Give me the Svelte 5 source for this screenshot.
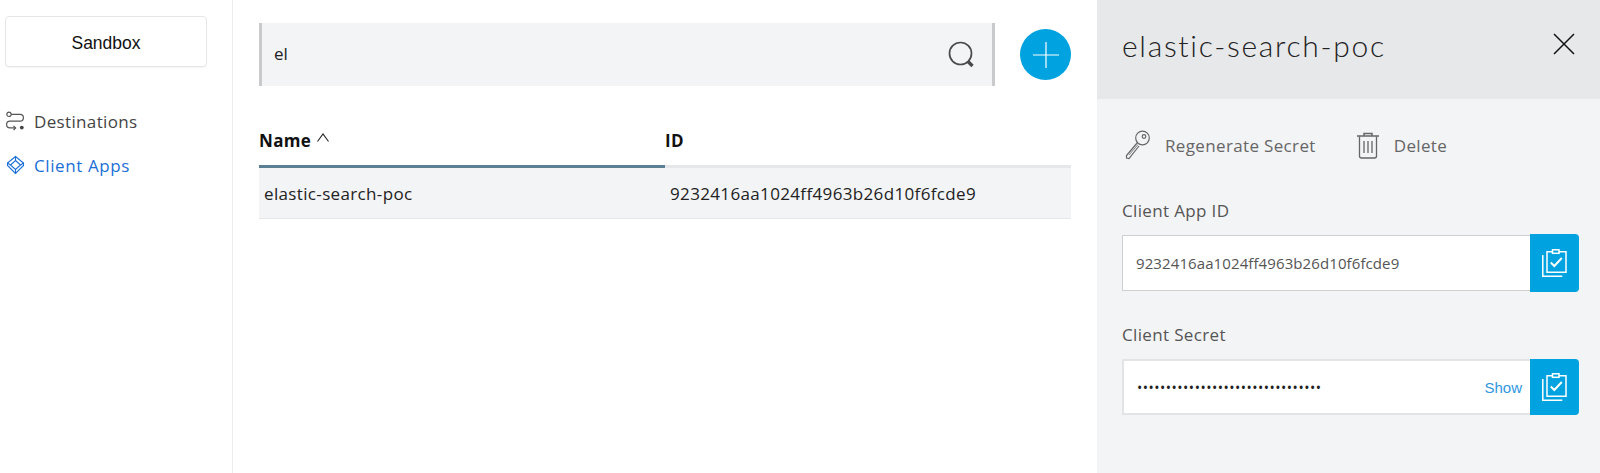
<script lang="ts">
	let search = $state('el');

	const clientApp = {
		name: 'elastic-search-poc',
		id: '9232416aa1024ff4963b26d10f6fcde9',
		secret: '•'.repeat(32)
	};
</script>

{#snippet clipboard()}
	<svg width="25" height="28" viewBox="0 0 25 28" fill="none" stroke="#fff" stroke-width="1.500">
		<path d="M10.500 2.800H5v20.500h19V2.800h-7"></path>
		<rect x="10.500" y="0.800" width="6.500" height="3.500"></rect>
		<path d="M0.800 6v21.200h19.500"></path>
		<path d="M8.800 13.500l3.500 3.500 7.500-8" stroke-width="2"></path>
	</svg>
{/snippet}

<div class="page">
	<aside class="sidebar">
		<button class="env-btn">Sandbox</button>
		<nav>
			<a class="nav-item" href="#destinations">
				<svg width="20" height="20" viewBox="0 0 20 20" fill="none" stroke="#555" stroke-width="1.200">
					<circle cx="4" cy="3.300" r="2.200"></circle>
					<path d="M6.200 3.300H15a3.400 3.400 0 0 1 0 6.800H5a3.400 3.400 0 0 0 0 6.800h5.500"></path>
					<path d="M8.500 14.800l2.100 2.100-2.100 2.100"></path>
					<circle cx="16.800" cy="16.600" r="1.900" fill="#444" stroke="none"></circle>
				</svg>
				Destinations
			</a>
			<a class="nav-item active" href="#apps">
				<svg width="20" height="20" viewBox="0 0 20 20" fill="none" stroke="#1b6fd6" stroke-width="1.100">
					<path d="M10.500 1.500l8 6.500v2.500l-8 8-8-8V8z"></path>
					<path d="M10.500 5.500l5 4.500-5 4.500-5-4.500z"></path>
					<path d="M2.500 8l3 2M18.500 8l-3 2M10.500 1.500v4M10.500 14.500v4"></path>
				</svg>
				Client Apps
			</a>
		</nav>
	</aside>

	<main class="content">
		<div class="toolbar">
			<div class="search">
				<input bind:value={search} />
				<svg width="28" height="28" viewBox="0 0 28 28" fill="none" stroke="#4a4a4a">
					<circle cx="12.500" cy="12.500" r="11" stroke-width="1.700"></circle>
					<path d="M20 20.500l4.500 4.500" stroke-width="3.400"></path>
				</svg>
			</div>
			<button class="add-btn" aria-label="Add">
				<svg width="26" height="26" viewBox="0 0 26 26" stroke="#fff" stroke-width="1.200">
					<path d="M0 13h26M13 0v26"></path>
				</svg>
			</button>
		</div>

		<table>
			<thead>
				<tr>
					<th class="sorted">
						Name
						<svg class="caret" width="12" height="9" viewBox="0 0 12 9" fill="none" stroke="#222" stroke-width="1.100">
							<path d="M0.500 8.500L6 1l5.500 7.500"></path>
						</svg>
					</th>
					<th>ID</th>
				</tr>
			</thead>
			<tbody>
				<tr>
					<td>{clientApp.name}</td>
					<td>{clientApp.id}</td>
				</tr>
			</tbody>
		</table>
	</main>

	<section class="panel">
		<header>
			<h2>{clientApp.name}</h2>
			<button class="close" aria-label="Close">
				<svg width="22" height="22" viewBox="0 0 22 22" stroke="#111" stroke-width="1.500">
					<path d="M1 1l20 20M21 1L1 21"></path>
				</svg>
			</button>
		</header>
		<div class="panel-body">
			<div class="actions">
				<span class="action">
					<svg width="26" height="30" viewBox="0 0 26 30" fill="none" stroke="#666" stroke-width="1.200">
						<circle cx="17.500" cy="8" r="6.800"></circle>
						<circle cx="19" cy="6.500" r="1.800"></circle>
						<path d="M12.500 12.500L1.500 25.500v2.500l2.500 .5 10-12.500"></path>
						<path d="M4 25l9-10.500" stroke-width=".8"></path>
					</svg>
					Regenerate Secret
				</span>
				<span class="action">
					<svg width="24" height="28" viewBox="0 0 24 28" fill="none" stroke="#666">
						<path d="M1 5h22M8 5V2.500h8V5" stroke-width="1.500"></path>
						<path d="M3.500 5.500V25a2 2 0 0 0 2 2h13a2 2 0 0 0 2-2V5.500" stroke-width="1.300"></path>
						<path d="M8 10v12M12 10v12M16 10v12" stroke-width="1.300"></path>
					</svg>
					Delete
				</span>
			</div>

			<div class="field-label">Client App ID</div>
			<div class="field">
				<span class="value">{clientApp.id}</span>
				<button class="copy" aria-label="Copy">{@render clipboard()}</button>
			</div>

			<div class="field-label">Client Secret</div>
			<div class="field light">
				<span class="value secret">{clientApp.secret}</span>
				<span class="show">Show</span>
				<button class="copy" aria-label="Copy">{@render clipboard()}</button>
			</div>
		</div>
	</section>
</div>

<style>
	:global(body) {
		margin: 0;
		background: #fff;
	}
	.page {
		display: flex;
		height: 473px;
		overflow: hidden;
		font-family: 'Open Sans', sans-serif;
		font-size: 17px;
		letter-spacing: 0.35px;
		color: #222;
	}
	button {
		padding: 0;
		border: none;
		background: none;
	}

	.sidebar {
		width: 233px;
		flex-shrink: 0;
		box-sizing: border-box;
		border-right: 1px solid #ececec;
		padding: 16px 26px 0 5px;
	}
	.env-btn {
		display: block;
		width: 202px;
		height: 51px;
		padding-top: 4px;
		background: #fff;
		border: 1px solid #e6e6e6;
		border-radius: 4px;
		box-shadow: 0 1px 1px rgba(0, 0, 0, 0.04);
		font-family: 'Liberation Sans', sans-serif;
		font-size: 17.500px;
		letter-spacing: 0;
		color: #111;
	}
	nav {
		display: flex;
		flex-direction: column;
		margin-top: 39px;
		gap: 14px;
	}
	.nav-item {
		display: flex;
		align-items: center;
		gap: 9px;
		height: 30px;
		color: #444;
		text-decoration: none;
	}
	.nav-item.active {
		color: #1b6fd6;
		font-weight: 500;
		letter-spacing: 0.6px;
	}

	.content {
		width: 864px;
		flex-shrink: 0;
		box-sizing: border-box;
		padding: 23px 26px 0 26px;
	}
	.toolbar {
		display: flex;
		align-items: flex-start;
		justify-content: space-between;
	}
	.search {
		display: flex;
		align-items: center;
		width: 736px;
		height: 63px;
		box-sizing: border-box;
		background: #f3f4f6;
		border-left: 3px solid #c9cacc;
		border-right: 3px solid #c9cacc;
		padding: 0 16px 0 12px;
	}
	.search input {
		flex: 1;
		border: none;
		outline: none;
		background: none;
		padding: 0 0 2px;
		font-family: 'Open Sans', sans-serif;
		font-size: 17px;
		color: #222;
	}
	.add-btn {
		display: flex;
		align-items: center;
		justify-content: center;
		width: 51px;
		height: 51px;
		margin-top: 6px;
		border-radius: 50%;
		background: #00a3e0;
	}

	table {
		width: 812px;
		margin-top: 33px;
		border-collapse: collapse;
		table-layout: fixed;
	}
	th {
		height: 42px;
		padding: 0 0 4px;
		text-align: left;
		font-weight: 700;
		color: #111;
		border-bottom: 3px solid #e6e7e9;
	}
	th.sorted {
		width: 406px;
		border-bottom-color: #5b7f95;
	}
	.caret {
		margin-left: 1px;
		vertical-align: 5px;
	}
	td {
		height: 50px;
		padding: 0 5px;
		background: #f3f4f6;
		border-bottom: 1px solid #e6e7e9;
		color: #222;
	}

	.panel {
		flex: 1;
		background: #f3f4f6;
	}
	.panel header {
		display: flex;
		align-items: center;
		justify-content: space-between;
		height: 99px;
		background: #e7e8ea;
		padding: 0 25px 0 25px;
		box-sizing: border-box;
	}
	.panel h2 {
		margin: 0 0 10px;
		font-family: 'Lato', sans-serif;
		font-size: 30px;
		font-weight: 300;
		letter-spacing: 1.700px;
		color: #222;
	}
	.close {
		display: flex;
		margin-bottom: 11px;
	}
	.panel-body {
		padding: 0 21px 0 25px;
	}
	.actions {
		display: flex;
		gap: 40px;
		height: 60px;
		margin-top: 16px;
		align-items: center;
		padding-left: 3px;
	}
	.action {
		display: flex;
		align-items: center;
		gap: 14px;
		color: #666;
	}
	.field-label {
		margin-top: 24px;
		line-height: 24px;
		color: #555;
	}
	.field {
		display: flex;
		align-items: center;
		height: 56px;
		margin-top: 12px;
		margin-bottom: 32px;
		box-sizing: border-box;
		background: #fff;
		border: 1px solid #cfd0d2;
		border-right: none;
		border-radius: 0 4px 4px 0;
	}
	.field-label + .field + .field-label {
		margin-top: 0;
	}
	.field.light {
		border: 2px solid #e3e4e6;
		border-right: none;
	}
	.value {
		flex: 1;
		padding-left: 13px;
		font-size: 15px;
		letter-spacing: 0.100px;
		color: #555;
	}
	.secret {
		color: #222;
		font-size: 14px;
		letter-spacing: 0.500px;
	}
	.show {
		margin-right: 8px;
		font-family: 'Liberation Sans', sans-serif;
		font-size: 15px;
		letter-spacing: 0;
		color: #2f97e0;
	}
	.copy {
		display: flex;
		align-items: center;
		justify-content: center;
		align-self: stretch;
		width: 49px;
		margin: -2px 0;
		background: #00a3e0;
		border-radius: 0 4px 4px 0;
	}
</style>
